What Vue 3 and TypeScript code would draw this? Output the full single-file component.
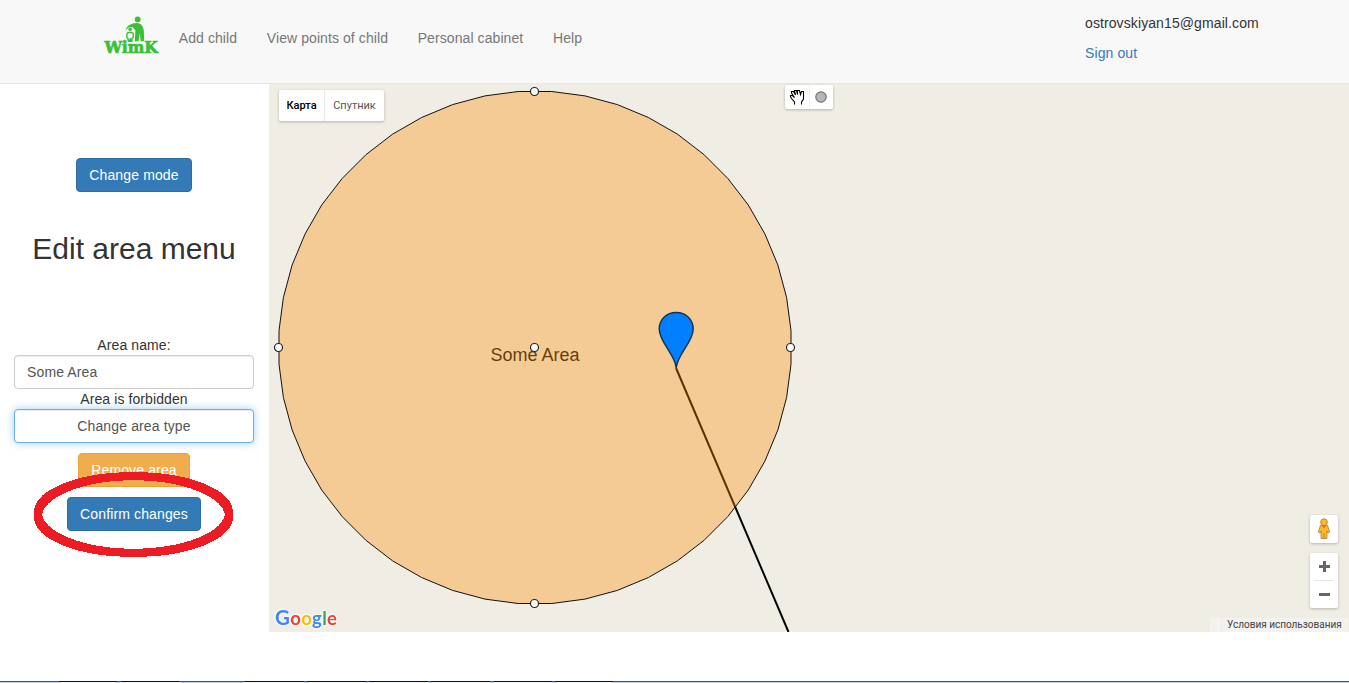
<script setup lang="ts">
import { ref } from 'vue'

const links: string[] = ['Add child', 'View points of child', 'Personal cabinet', 'Help']
const areaName = ref('Some Area')

const center = { x: 266, y: 263.5 }
const radius = 256.5
const steps = 48
const outline: string = Array.from({ length: steps }, (_, i) => {
  const a = ((-3.75 + (i * 360) / steps) * Math.PI) / 180
  return `${(center.x + radius * Math.sin(a)).toFixed(1)},${(center.y - radius * Math.cos(a)).toFixed(1)}`
}).join(' ')

const handles = [
  { x: 265.5, y: 7.5 },
  { x: 521.5, y: 263.5 },
  { x: 265.5, y: 519.5 },
  { x: 9.5, y: 263.5 },
  { x: 265.5, y: 263.5 },
]

// Offsets that give the marker ring the look of a square brush
const brush: number[][] = [[0, 0], [-2, -2], [2, -2], [-2, 2], [2, 2]]

const tabs: number[][] = [[59, 58], [121, 58], [245, 59], [307, 59], [369, 59], [431, 59], [494, 58], [555, 58]]
</script>

<template>
  <div class="page">
    <header class="navbar">
      <svg class="logo" width="58" height="42" viewBox="0 0 58 42">
        <g fill="#3bbf35">
          <circle cx="34.7" cy="5.4" r="2.9" />
          <path d="M22.6 16.5C23 11.5 29.5 8.6 34 8.9C38.4 9 40.6 13 40.8 17L41.2 27.2H37.6L36.8 19L35.6 27.2H31.8L32.4 16.5L30 13.4C27 12.4 25 13.4 22.6 16.5Z" />
          <circle cx="27.2" cy="15.2" r="1.8" />
          <path d="M24 19.4C24.4 17.8 29.6 17.8 30.2 19.4L30.4 23L29 24.5L28.8 27.2H27.8L27.2 24.5L26.5 27.2H25.4L25 24.5L23.8 23Z" fill="none" stroke="#3bbf35" stroke-width="1.4" />
        </g>
        <text x="1.5" y="38.6" textLength="53.5" lengthAdjust="spacingAndGlyphs">WimK</text>
      </svg>
      <nav class="links">
        <a v-for="l in links" :key="l">{{ l }}</a>
      </nav>
      <div class="account">
        <span>ostrovskiyan15@gmail.com</span>
        <a>Sign out</a>
      </div>
    </header>

    <main class="content">
      <aside class="sidebar">
        <button class="btn primary">Change mode</button>
        <h2>Edit area menu</h2>
        <label class="caption">Area name:</label>
        <input v-model="areaName" class="control" />
        <span class="caption">Area is forbidden</span>
        <button class="control focused">Change area type</button>
        <button class="btn warning">Remove area</button>
        <button class="btn primary confirm">Confirm changes</button>
        <svg class="mark" width="202" height="86" viewBox="0 0 202 86">
          <ellipse v-for="(b, i) in brush" :key="i" :cx="100.5 + b[0]" :cy="43.5 + b[1]" rx="95.5" ry="38.3" fill="none" stroke="#ed1c24" :stroke-width="i === 0 ? 8 : 4" shape-rendering="crispEdges" />
        </svg>
      </aside>

      <section class="map">
        <svg class="canvas" width="1080" height="548" viewBox="0 0 1080 548">
          <text x="266" y="277" text-anchor="middle" class="area-label">Some Area</text>
          <path d="M407 284L519.5 548" stroke="#000" stroke-width="2" />
          <polygon :points="outline" fill="#ff8c00" fill-opacity=".35" stroke="#111" stroke-width="1" />
          <path d="M407.2 284C406.4 271 390.2 258 390.2 245C390.2 235.5 397.5 228.5 407.2 228.5C417 228.5 424.2 235.5 424.2 245C424.2 258 408 271 407.2 284Z" fill="#0080ff" stroke="#172f4a" stroke-width="1.4" />
          <circle v-for="(h, i) in handles" :key="i" :cx="h.x" :cy="h.y" r="4" fill="#fff" stroke="#222" stroke-width="1.2" />
        </svg>

        <div class="map-types box">
          <span class="selected">Карта</span><span>Спутник</span>
        </div>

        <div class="draw-tools box">
          <svg width="48" height="24" viewBox="0 0 48 24">
            <path d="M24.5 0V24" stroke="#eee" />
            <path d="M9.5 19.5V17L6.5 13.5L5.5 11.5V10.5H7.5L9.5 12.5L6.5 8V6.5H8.5L10.5 10L9.5 6V5.5H11.5L12.5 9.5V5.5H14.5L15.5 9.5L16.5 6.5H18.5V14L16.5 17V19.5" fill="#fff" stroke="#000" stroke-width="1.1" />
            <circle cx="36" cy="12" r="5.2" fill="#b7b7b7" stroke="#737373" stroke-width="1.2" />
          </svg>
        </div>

        <div class="controls">
          <div class="box pegman">
            <svg width="14" height="22" viewBox="0 0 14 22">
              <g fill="#fbb829" stroke="#a68143" stroke-width=".8">
                <path d="M3.5 7.2H10.5L12.7 14L11 15L10 13V20.5H4V13L3 15L1.3 14Z" />
                <circle cx="7" cy="4.2" r="3.4" />
              </g>
              <path d="M4.5 7.6H9.5L7 10.3Z" fill="#e8711c" />
              <path d="M7 15V20" stroke="#a68143" stroke-width=".8" />
            </svg>
          </div>
          <div class="box zoomer">
            <svg width="28" height="55" viewBox="0 0 28 55">
              <path d="M9 13.5H20M14.5 8V19M9 41.5H20" stroke="#666" stroke-width="3" />
              <path d="M4 27.5H23" stroke="#e6e6e6" />
            </svg>
          </div>
        </div>

        <div class="google">
          <span class="blue cap">G</span><span class="red">o</span><span class="yellow">o</span><span class="blue">g</span><span class="green">l</span><span class="red">e</span>
        </div>
        <div class="terms"><i></i><span>Условия использования</span></div>
      </section>
    </main>

    <footer class="taskbar">
      <svg width="1349" height="2" viewBox="0 0 1349 2" shape-rendering="crispEdges">
        <rect width="1349" height="1" fill="#435773" />
        <rect y="1" width="1349" height="1" fill="#bfd0e8" />
        <g v-for="t in tabs" :key="t[0]">
          <rect :x="t[0]" :width="t[1]" height="1" fill="#101318" />
          <rect :x="t[0]" y="1" :width="t[1]" height="1" fill="#f5f8fd" />
        </g>
      </svg>
    </footer>
  </div>
</template>

<style>
body {
  margin: 0;
  overflow: hidden;
}
</style>

<style scoped>
.page {
  display: flex;
  flex-direction: column;
  width: 1349px;
  height: 683px;
  background: #fff;
  color: #333;
  font: 14px/20px "Liberation Sans", Arial, sans-serif;
  letter-spacing: 0.1px;
}
.navbar {
  display: flex;
  box-sizing: border-box;
  height: 84px;
  padding-left: 103px;
  background: #f8f8f8;
  border-bottom: 1px solid #e7e7e7;
}
.logo {
  margin-top: 14px;
}
.logo text {
  font: bold 16px "DejaVu Serif", serif;
  letter-spacing: 0;
  fill: #3bbf35;
  stroke: #3bbf35;
  stroke-width: 0.7px;
}
.links {
  display: flex;
  gap: 29.7px;
  margin: 28px 0 0 17.8px;
  color: #777;
  letter-spacing: 0.08px;
}
.account {
  display: flex;
  flex-direction: column;
  gap: 10px;
  width: 264px;
  margin: 13px 0 0 auto;
}
.account a {
  color: #337ab7;
}
.content {
  display: flex;
  height: 548px;
}
.sidebar {
  position: relative;
  display: flex;
  flex-direction: column;
  align-items: center;
  box-sizing: border-box;
  width: 269px;
  padding: 74px 15px 0 14px;
}
.btn {
  box-sizing: border-box;
  height: 34px;
  padding: 0 12px;
  border: 1px solid #2e6da4;
  border-radius: 4px;
  color: #fff;
  font: inherit;
  letter-spacing: 0.13px;
}
.primary {
  background: #337ab7;
}
.warning {
  margin-top: 10px;
  background: #f0ad4e;
  border-color: #eea236;
}
.confirm {
  margin-top: 10px;
}
h2 {
  margin: 40px 0 70px;
  font-size: 30px;
  font-weight: 400;
  line-height: 33px;
  letter-spacing: 0;
  white-space: nowrap;
}
.caption {
  height: 20px;
}
.control {
  box-sizing: border-box;
  width: 240px;
  height: 34px;
  padding: 6px 12px;
  border: 1px solid #ccc;
  border-radius: 4px;
  background: #fff;
  box-shadow: inset 0 1px 1px rgba(0, 0, 0, 0.075);
  color: #555;
  font: inherit;
  letter-spacing: 0.13px;
}
.focused {
  border-color: #66afe9;
  box-shadow: inset 0 1px 1px rgba(0, 0, 0, 0.075), 0 0 8px rgba(102, 175, 233, 0.6);
}
.mark {
  position: absolute;
  left: 33px;
  top: 387px;
}
.map {
  position: relative;
  width: 1080px;
  background: #f0ede5;
  font-family: Roboto, sans-serif;
  letter-spacing: 0;
}
.canvas {
  display: block;
}
.area-label {
  font: 18px "Liberation Sans", Arial, sans-serif;
  fill: #111;
}
.box {
  background: #fff;
  border-radius: 2px;
  box-shadow: 0 1px 3px rgba(0, 0, 0, 0.25);
}
.map-types {
  position: absolute;
  left: 10px;
  top: 6px;
  display: flex;
  height: 31px;
  font-size: 11px;
  line-height: 31px;
  color: #565656;
}
.map-types span {
  box-sizing: border-box;
  width: 59px;
  text-align: center;
}
.map-types .selected {
  width: 46px;
  border-right: 1px solid #e8e8e8;
  color: #000;
  font-weight: 500;
}
.draw-tools {
  position: absolute;
  left: 516px;
  top: 1px;
  height: 24px;
}
.draw-tools svg,
.zoomer svg {
  display: block;
}
.controls {
  position: absolute;
  left: 1041px;
  top: 431px;
  display: flex;
  flex-direction: column;
  gap: 10px;
  width: 28px;
}
.pegman {
  display: flex;
  align-items: center;
  justify-content: center;
  height: 28px;
}
.google {
  position: absolute;
  left: 6px;
  top: 519px;
  display: flex;
  align-items: baseline;
  font: bold 18.5px/28px Lato, sans-serif;
  letter-spacing: 0.3px;
  filter: drop-shadow(0 0 1px #fff) drop-shadow(0 0 1px #fff);
}
.cap {
  font-size: 20.5px;
}
.blue {
  color: #4285f4;
}
.red {
  color: #ea4335;
}
.yellow {
  color: #fbbc05;
}
.green {
  color: #34a853;
}
.terms {
  position: absolute;
  right: 1px;
  bottom: 0;
  display: flex;
  height: 14px;
  font-size: 10px;
  line-height: 14px;
  color: #444;
}
.terms i {
  width: 11px;
  margin-right: 1px;
  background: #f3f2ee;
}
.terms span {
  box-sizing: border-box;
  width: 126px;
  padding-left: 5px;
  background: #f3f2ee;
  white-space: nowrap;
}
.taskbar {
  height: 2px;
  margin-top: auto;
}
.taskbar svg {
  display: block;
}
</style>
